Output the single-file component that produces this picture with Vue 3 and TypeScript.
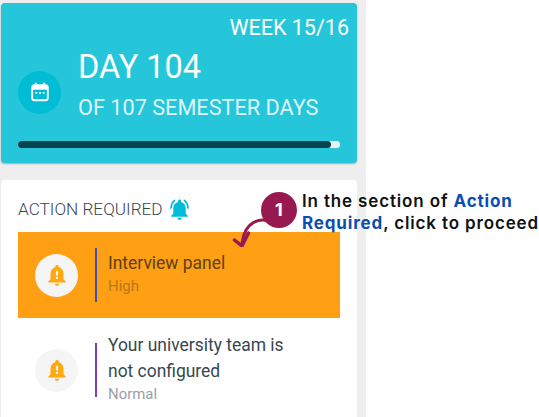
<script setup lang="ts">
interface Item { title: string; level: string; urgent: boolean }
const items: Item[] = [
  { title: 'Interview panel', level: 'High', urgent: true },
  { title: 'Your university team is not configured', level: 'Normal', urgent: false },
]
const bell = 'M12 22c1.1 0 2-.9 2-2h-4c0 1.100.9 2 2 2zm6-6v-5c0-3.070-1.640-5.640-4.500-6.320V4c0-.830-.670-1.500-1.500-1.500s-1.500.670-1.500 1.500v.680C7.630 5.360 6 7.920 6 11v5l-2 2v1h16v-1l-2-2z'
</script>

<template>
  <div class="page">
    <main class="panel">
      <section class="hero">
        <div class="week">WEEK 15/16</div>
        <div class="day-row">
          <span class="cal-badge">
            <svg viewBox="0 0 24 24" width="22" height="22" fill="none">
              <path d="M7.500 2.500v3M16.500 2.500v3" stroke="#fff" stroke-width="2" stroke-linecap="round" />
              <rect x="3.500" y="4.500" width="17" height="16.500" rx="2.500" fill="none" stroke="#fff" stroke-width="2" />
              <rect x="3.500" y="4.500" width="17" height="5" fill="#fff" />
              <rect x="7" y="12" width="2" height="2" fill="#fff" />
              <rect x="11" y="12" width="2" height="2" fill="#fff" />
              <rect x="15" y="12" width="2" height="2" fill="#fff" />
            </svg>
          </span>
          <div class="day-text">
            <div class="day">DAY 104</div>
            <div class="of">OF 107 SEMESTER DAYS</div>
          </div>
        </div>
        <div class="track"><div class="fill" :style="{ width: (104 / 107 * 100) + '%' }"></div></div>
      </section>

      <section class="actions">
        <h2 class="actions-title">
          <span>ACTION REQUIRED</span>
          <svg viewBox="0 0 24 24" width="25" height="25" fill="#00bcd9">
            <path :d="bell" />
            <path d="M3.800 10.500C4 7.500 5.200 5 7.300 3.300M20.200 10.500C20 7.500 18.800 5 16.700 3.300" fill="none" stroke="#00bcd9" stroke-width="1.600" stroke-linecap="round" />
          </svg>
        </h2>
        <article v-for="item in items" :key="item.title" class="item" :class="{ urgent: item.urgent }">
          <span class="bell-badge">
            <svg viewBox="0 0 24 24" width="26" height="26">
              <path :d="bell" fill="#ffa80f" />
              <path d="M11 8h2v4.500h-2zM11 13.700h2v2h-2z" fill="#f5f5f5" />
            </svg>
          </span>
          <div class="item-text">
            <div class="item-title">{{ item.title }}</div>
            <div class="item-level">{{ item.level }}</div>
          </div>
        </article>
      </section>
    </main>

    <aside class="callout">
      <svg class="arrow" viewBox="0 0 50 40" width="50" height="40" fill="none">
        <path d="M42 15C30 10 15 14 12 36" stroke="#98194f" stroke-width="3" stroke-linecap="round" />
        <path d="M4.500 33L12 39L18.500 26" stroke="#98194f" stroke-width="3.500" stroke-linecap="round" stroke-linejoin="round" />
      </svg>
      <span class="step">1</span>
      <p class="callout-text">In the section of <b>Action</b><br /><b>Required</b>, click to proceed</p>
    </aside>
  </div>
</template>

<style>
html, body { margin: 0; background: #fff; }
</style>

<style scoped>
.page {
  position: relative;
  width: 539px;
  height: 417px;
  overflow: hidden;
  background: #fff;
  font-family: Roboto, "Liberation Sans", sans-serif;
}
.panel {
  width: 366px;
  height: 417px;
  box-sizing: border-box;
  padding: 3px 9px 0 1px;
  background: #eee;
  display: flex;
  flex-direction: column;
  gap: 17px;
}
.hero {
  height: 160px;
  box-sizing: border-box;
  padding: 12px 8px 0 17px;
  flex: none;
  background: #26c6da;
  border-radius: 4px;
  box-shadow: 0 1px 2px rgba(0, 0, 0, 0.3);
  color: #fff;
}
.week {
  text-align: right;
  font-size: 21.5px;
  line-height: 26px;
}
.day-row {
  display: flex;
  align-items: center;
  gap: 17px;
  margin-top: 6px;
}
.cal-badge {
  width: 43px;
  height: 43px;
  margin-top: 16px;
  border-radius: 50%;
  background: #00bcd4;
  display: flex;
  align-items: center;
  justify-content: center;
  flex: none;
}
.day {
  font-size: 32.5px;
  line-height: 40px;
}
.of {
  margin-top: 8px;
  font-size: 21.7px;
  line-height: 26px;
  color: rgba(255, 255, 255, 0.85);
}
.track {
  width: 322px;
  height: 7px;
  margin-top: 20px;
  border-radius: 4px;
  background: #eceff1;
}
.fill {
  height: 100%;
  border-radius: 4px;
  background: #05444f;
}
.actions {
  flex: 1;
  box-sizing: border-box;
  padding: 17px 17px 0 17px;
  background: #fff;
  border-radius: 4px 4px 0 0;
}
.actions-title {
  margin: 0;
  height: 35px;
  display: flex;
  align-items: flex-start;
  gap: 4px;
  font-size: 17.2px;
  line-height: 25px;
  font-weight: 300;
  color: #37474f;
}
.item {
  display: flex;
  align-items: center;
  height: 104px;
  padding-left: 17px;
  color: #37474f;
}
.item.urgent {
  height: 86px;
  background: #ff9f14;
  color: #5d4210;
}
.bell-badge {
  width: 43px;
  height: 43px;
  border-radius: 50%;
  background: #f5f5f5;
  display: flex;
  align-items: center;
  justify-content: center;
  flex: none;
}
.item-text {
  margin-left: 17px;
  padding: 0 0 4px 11px;
  border-left: 2.5px solid #7e3fb8;
  width: 186px;
  height: 50px;
  display: flex;
  flex-direction: column;
  justify-content: center;
}
.urgent .item-text {
  border-left-color: #3f51b5;
}
.item-title {
  font-size: 17.45px;
  line-height: 26px;
}
.item-level {
  font-size: 14.93px;
  line-height: 19px;
  margin-top: 1px;
  color: #9a9ea8;
}
.urgent .item-level {
  color: #b57a18;
}
.callout {
  position: absolute;
  left: 230px;
  top: 189px;
  width: 309px;
  height: 60px;
}
.arrow {
  position: absolute;
  left: 0;
  top: 18px;
}
.step {
  position: absolute;
  left: 31px;
  top: 3px;
  width: 36px;
  height: 36px;
  border-radius: 50%;
  background: #98194f;
  color: #fff;
  font: 700 18px/36px Inter, sans-serif;
  text-align: center;
}
.callout-text {
  position: absolute;
  left: 72px;
  top: 1px;
  width: 237px;
  margin: 0;
  font: 600 17px/22px Inter, sans-serif;
  letter-spacing: 0.85px;
  white-space: nowrap;
  color: #111;
}
.callout-text b {
  font-weight: 700;
  color: #0b4db3;
}
</style>
